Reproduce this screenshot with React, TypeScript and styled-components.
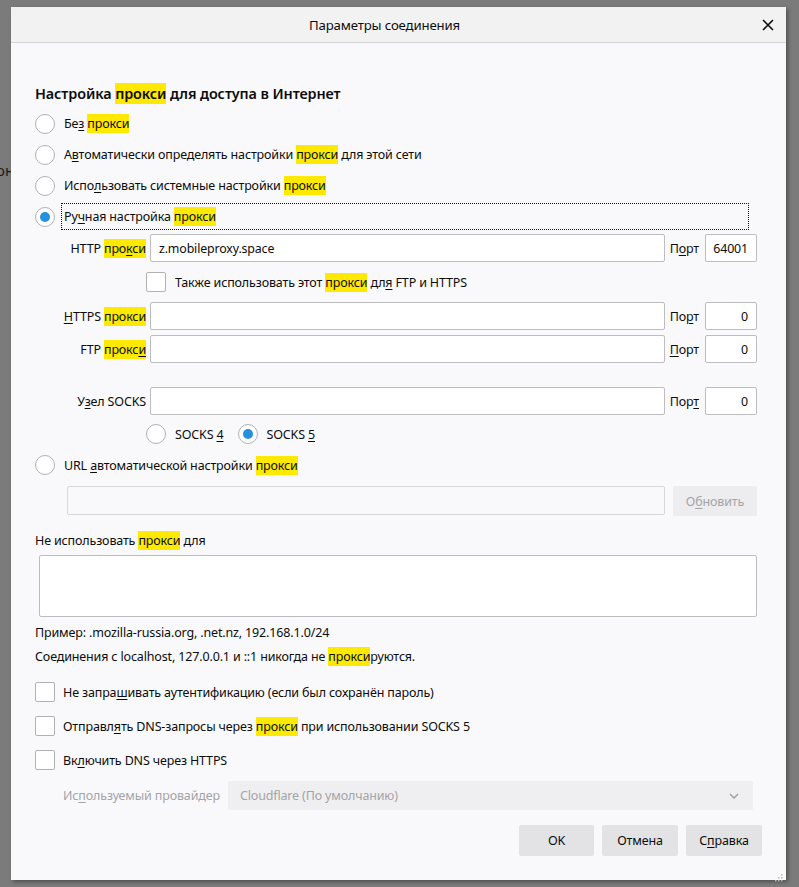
import * as React from 'react';
import styled, { createGlobalStyle } from 'styled-components';

const Global = createGlobalStyle`
html, body {
  margin: 0;
  padding: 0;
  background: #7b7b7b;
}
* { box-sizing: border-box; }
`;

const FONT = `"Noto Sans", "Open Sans", "DejaVu Sans", sans-serif`;

const Backdrop = styled.div`
width: 799px;
height: 887px;
padding: 7px 13px 7px 11px;
position: relative;
overflow: hidden;
font-family: ${FONT};
`;

const BehindText = styled.div`
position: absolute;
left: -4px;
top: 160px;
font-size: 15px;
color: #1a1a1a;
`;

const Dialog = styled.div`
position: relative;
height: 873px;
background: #f9f9fb;
display: flex;
flex-direction: column;
box-shadow: 2px 2px 4px rgba(0,0,0,0.35);
color: #0c0c0d;
font-size: 12.5px;
letter-spacing: -0.15px;
`;

const TitleBar = styled.div`
height: 36px;
flex: none;
background: #f2f2f2;
border-bottom: 1px solid #d4d4d6;
display: flex;
align-items: center;
padding: 0 10px 0 28px;
`;

const TitleText = styled.div`
flex: 1;
text-align: center;
font-size: 13.2px;
margin-right: 30px;
`;

const CloseButton = styled.div`
width: 16px;
height: 16px;
display: flex;
align-items: center;
justify-content: center;
`;

const Body = styled.div`
flex: 1;
display: flex;
flex-direction: column;
padding: 41px 29px 0 24px;
`;

const Heading = styled.div`
height: 20px;
line-height: 20px;
font-size: 14.4px;
font-weight: 600;
letter-spacing: -0.1px;
margin-bottom: 4px;
`;

const Mark = styled.span`
background: #ffe900;
padding: 1px 0;
`;

const Key = styled.u`
text-decoration: underline;
text-underline-offset: 2px;
text-decoration-thickness: 1px;
`;

const OptionRow = styled.div<{ $h?: number; $mt?: number }>`
height: ${(p) => p.$h ?? 31}px;
display: flex;
align-items: center;
gap: 9px;
margin-top: ${(p) => p.$mt ?? 0}px;
`;

const RadioCircle = styled.span<{ $checked?: boolean }>`
width: 20px;
height: 20px;
flex: none;
border-radius: 50%;
border: 1px solid #b1b1b3;
background: #fff;
display: flex;
align-items: center;
justify-content: center;
&::after {
  content: '';
  display: ${(p) => (p.$checked ? 'block' : 'none')};
  width: 10px;
  height: 10px;
  border-radius: 50%;
  background: #2690dc;
}
`;

const CheckBox = styled.span`
width: 20px;
height: 20px;
flex: none;
border-radius: 2px;
border: 1px solid #b1b1b3;
background: #fff;
`;

const FocusLabel = styled.span`
flex: 1;
height: 27px;
margin-left: -3px;
margin-right: 8px;
border: 1px dotted #111;
padding-left: 2px;
display: flex;
align-items: center;
`;

const ProxyGrid = styled.div`
display: grid;
grid-template-columns: 111px 1fr auto 52px;
column-gap: 4px;
row-gap: 5px;
align-items: center;
margin-top: 2px;
`;

const FieldLabel = styled.div`
text-align: right;
white-space: nowrap;
`;

const PortLabel = styled.div`
padding: 0 2px 0 1px;
`;

const TextField = styled.div<{ $disabled?: boolean; $h?: number; $align?: string }>`
flex: 1;
height: ${(p) => p.$h ?? 28}px;
background: ${(p) => (p.$disabled ? '#f9f9fb' : '#fff')};
border: 1px solid ${(p) => (p.$disabled ? '#d7d7db' : '#bdbdc0')};
border-radius: 2px;
display: flex;
align-items: center;
justify-content: ${(p) => p.$align ?? 'flex-start'};
padding: 0 8px;
font-size: 12.4px;
`;

const SpanRow = styled.div<{ $h: number }>`
grid-column: 2 / -1;
margin-left: -4px;
height: ${(p) => p.$h}px;
display: flex;
align-items: center;
gap: 9px;
`;

const Spacer = styled.div<{ $h: number }>`
grid-column: 1 / -1;
height: ${(p) => p.$h}px;
`;

const SocksChoice = styled.span`
display: flex;
align-items: center;
gap: 9px;
margin-right: 5px;
`;

const UrlRow = styled.div`
display: flex;
gap: 8px;
margin: 6px 0 0 32px;
`;

const GhostButton = styled.div`
width: 84px;
height: 30px;
background: #ededf0;
color: #a4a4a8;
border-radius: 2px;
display: flex;
align-items: center;
justify-content: center;
`;

const TextLine = styled.div<{ $mt?: number }>`
height: 20px;
line-height: 20px;
margin-top: ${(p) => p.$mt ?? 0}px;
white-space: nowrap;
`;

const TextArea = styled.div`
height: 62px;
margin: 4px 0 0 4px;
background: #fff;
border: 1px solid #bdbdc0;
border-radius: 2px;
`;

const CheckList = styled.div`
margin-top: 8px;
display: flex;
flex-direction: column;
`;

const CheckRow = styled.div`
height: 34px;
display: flex;
align-items: center;
gap: 8px;
`;

const ProviderRow = styled.div`
display: flex;
align-items: center;
margin: 4px 4px 0 28px;
gap: 8px;
color: #a4a4a8;
`;

const Select = styled.div`
flex: 1;
height: 29px;
background: #efeff1;
border-radius: 2px;
display: flex;
align-items: center;
justify-content: space-between;
padding: 0 14px 0 12px;
`;

const Footer = styled.div`
display: flex;
justify-content: flex-end;
gap: 8px;
margin: 15px -5px 0 0;
`;

const Button = styled.div<{ $w: number }>`
width: ${(p) => p.$w}px;
height: 31px;
background: #e3e3e5;
border-radius: 2px;
display: flex;
align-items: center;
justify-content: center;
`;

const Grip = styled.div`
position: absolute;
right: 3px;
bottom: 3px;
width: 8px;
height: 8px;
`;

const Radio = ({ checked, children }: { checked?: boolean; children: React.ReactNode }) => (
  <OptionRow>
    <RadioCircle $checked={checked} />
    <span>{children}</span>
  </OptionRow>
);

const P = () => <Mark>прокси</Mark>;

export default function App() {
  return (
    <Backdrop>
      <Global />
      <BehindText>он</BehindText>
      <Dialog>
        <TitleBar>
          <TitleText>Параметры соединения</TitleText>
          <CloseButton>
            <svg width="12" height="12" viewBox="0 0 12 12">
              <path d="M1 1 L11 11 M11 1 L1 11" stroke="#0c0c0d" strokeWidth="1.6" fill="none" />
            </svg>
          </CloseButton>
        </TitleBar>
        <Body>
          <Heading>
            Настройка <P /> для доступа в Интернет
          </Heading>
          <Radio>
            Бе<Key>з</Key> <P />
          </Radio>
          <Radio>
            А<Key>в</Key>томатически определять настройки <P /> для этой сети
          </Radio>
          <Radio>
            Испо<Key>л</Key>ьзовать системные настройки <P />
          </Radio>
          <OptionRow>
            <RadioCircle $checked />
            <FocusLabel>
              Ру<Key>ч</Key>ная настройка&nbsp;<P />
            </FocusLabel>
          </OptionRow>

          <ProxyGrid>
            <FieldLabel>
              HTTP <Mark>про<Key>к</Key>си</Mark>
            </FieldLabel>
            <TextField>z.mobileproxy.space</TextField>
            <PortLabel>
              П<Key>о</Key>рт
            </PortLabel>
            <TextField $align="flex-end">64001</TextField>

            <SpanRow $h={30}>
              <CheckBox />
              <span>
                Также использовать этот <P /> дл<Key>я</Key> FTP и HTTPS
              </span>
            </SpanRow>

            <FieldLabel>
              <Key>H</Key>TTPS <P />
            </FieldLabel>
            <TextField />
            <PortLabel>
              По<Key>р</Key>т
            </PortLabel>
            <TextField $align="flex-end">0</TextField>

            <FieldLabel>
              FTP <Mark>прокс<Key>и</Key></Mark>
            </FieldLabel>
            <TextField />
            <PortLabel>
              <Key>П</Key>орт
            </PortLabel>
            <TextField $align="flex-end">0</TextField>

            <Spacer $h={14} />

            <FieldLabel>
              У<Key>з</Key>ел SOCKS
            </FieldLabel>
            <TextField />
            <PortLabel>
              Пор<Key>т</Key>
            </PortLabel>
            <TextField $align="flex-end">0</TextField>

            <SpanRow $h={28}>
              <SocksChoice>
                <RadioCircle />
                <span>
                  SOCKS <Key>4</Key>
                </span>
              </SocksChoice>
              <SocksChoice>
                <RadioCircle $checked />
                <span>
                  SOCKS <Key>5</Key>
                </span>
              </SocksChoice>
            </SpanRow>
          </ProxyGrid>

          <OptionRow $h={30} $mt={2}>
            <RadioCircle />
            <span>
              URL <Key>а</Key>втоматической настройки <P />
            </span>
          </OptionRow>
          <UrlRow>
            <TextField $disabled $h={29} />
            <GhostButton>
              О<Key>б</Key>новить
            </GhostButton>
          </UrlRow>

          <TextLine $mt={15}>
            Не использовать <P /> для
          </TextLine>
          <TextArea />
          <TextLine $mt={6}>Пример: .mozilla-russia.org, .net.nz, 192.168.1.0/24</TextLine>
          <TextLine $mt={4}>
            Соединения с localhost, 127.0.0.1 и ::1 никогда не <P />руются.
          </TextLine>

          <CheckList>
            <CheckRow>
              <CheckBox />
              <span>
                Не запра<Key>ш</Key>ивать аутентификацию (если был сохранён пароль)
              </span>
            </CheckRow>
            <CheckRow>
              <CheckBox />
              <span>
                Отправл<Key>я</Key>ть DNS-запросы через <P /> при использовании SOCKS 5
              </span>
            </CheckRow>
            <CheckRow>
              <CheckBox />
              <span>
                Вк<Key>л</Key>ючить DNS через HTTPS
              </span>
            </CheckRow>
          </CheckList>

          <ProviderRow>
            <span>
              Ис<Key>п</Key>ользуемый провайдер
            </span>
            <Select>
              <span>Cloudflare (По умолчанию)</span>
              <svg width="10" height="6" viewBox="0 0 10 6">
                <path d="M1 1 L5 5 L9 1" stroke="#a4a4a8" strokeWidth="1.6" fill="none" />
              </svg>
            </Select>
          </ProviderRow>

          <Footer>
            <Button $w={75}>OK</Button>
            <Button $w={76}>Отмена</Button>
            <Button $w={76}>
              С<Key>п</Key>равка
            </Button>
          </Footer>
        </Body>
        <Grip>
          <svg width="8" height="8" viewBox="0 0 8 8" fill="#b5b5b8">
            <rect x="6" y="0" width="1.5" height="1.5" />
            <rect x="3" y="3" width="1.5" height="1.5" />
            <rect x="6" y="3" width="1.5" height="1.5" />
            <rect x="0" y="6" width="1.5" height="1.5" />
            <rect x="3" y="6" width="1.5" height="1.5" />
            <rect x="6" y="6" width="1.5" height="1.5" />
          </svg>
        </Grip>
      </Dialog>
    </Backdrop>
  );
}
